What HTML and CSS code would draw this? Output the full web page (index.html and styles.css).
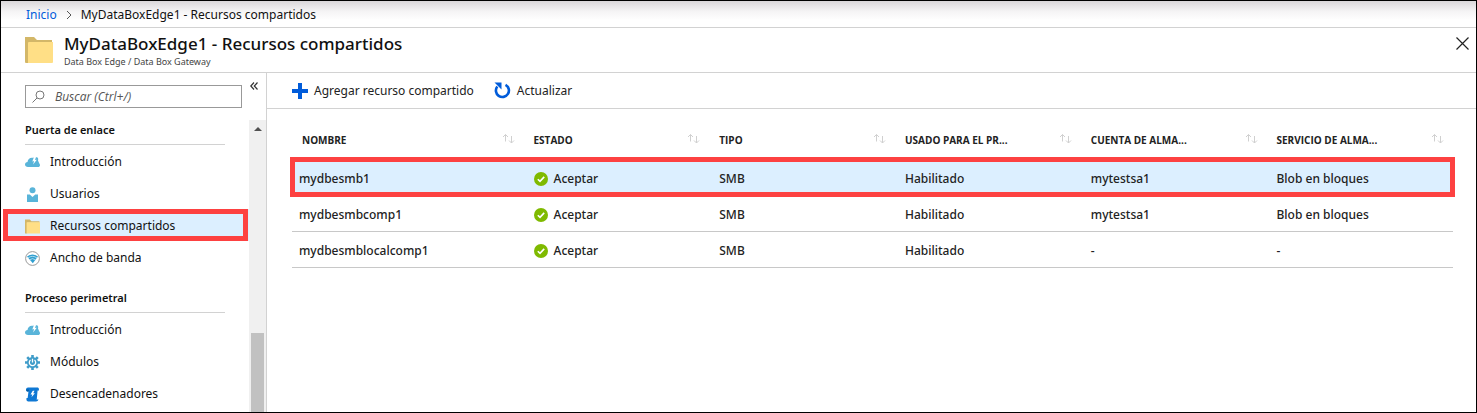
FILE: index.html
```html
<!DOCTYPE html>
<html lang="es">
<head>
<meta charset="utf-8">
<title>MyDataBoxEdge1 - Recursos compartidos</title>
<link rel="stylesheet" href="styles.css">
</head>
<body>
<svg class="defs" aria-hidden="true">
  <symbol id="cloud" viewBox="0 0 15 15"><path fill="#59b4d9" d="M3 12C1.200 12 0 11 0 9.600 0 8.300 1.100 7.300 2.500 7.100 2.800 4.700 4.500 2.800 6.900 2.800 9 2.800 10.500 1.800 12 2.300 13.200 2.700 13.500 4 13 5.500L14.200 8.200C14.800 8.800 15 9.500 15 10.200 15 11.300 14.200 12 13 12Z"/><path fill="#fff" d="M9 2 7.300 6.400 9.100 6.100 8.100 9.600 11.800 4.800 10 5.100 11 2Z"/></symbol>
  <symbol id="folder" viewBox="0 0 28 26"><path fill="#d3b768" d="M0 0h9l3 3h15v3H4v20H1q-1 0-1-1z"/><path fill="#ffdf86" d="M4 5h24v20q0 1-1 1H3V6q0-1 1-1z"/></symbol>
  <symbol id="sort" viewBox="0 0 12 10"><path fill="none" stroke="#d0d0d0" d="M2.500 7.500V.5M0 3 2.500.5 5 3M8.500 2v7M6 6.500 8.500 9 11 6.500"/></symbol>
  <symbol id="ok" viewBox="0 0 14 14"><circle cx="7" cy="7" r="7" fill="#7fba00"/><path fill="none" stroke="#fff" stroke-width="1.600" d="M3.800 7.200 6 9.400 10.200 4.900"/></symbol>
</svg>
<div class="blade">
  <nav class="crumbs" aria-label="Ruta">
    <a href="#">Inicio</a>
    <svg width="6" height="10" viewBox="0 0 6 10"><path fill="none" stroke="#555" d="M1 1l4 4-4 4"/></svg>
    <span>MyDataBoxEdge1 - Recursos compartidos</span>
  </nav>
  <header class="title-bar">
    <svg class="title-icon"><use href="#folder"/></svg>
    <div class="titles">
      <h1>MyDataBoxEdge1 - Recursos compartidos</h1>
      <p>Data Box Edge / Data Box Gateway</p>
    </div>
    <button class="close" aria-label="Cerrar"><svg width="13" height="13" viewBox="0 0 13 13"><path stroke="#222" stroke-width="1.200" d="M.5.500l12 12M12.500.500l-12 12"/></svg></button>
  </header>
  <div class="content">
    <aside class="sidebar">
      <div class="search-row">
        <label class="search">
          <svg width="13" height="13" viewBox="0 0 13 13"><g fill="none" stroke="#777"><circle cx="8" cy="5" r="4"/><path d="M5 8 .5 12.500"/></g></svg>
          <input type="search" placeholder="Buscar (Ctrl+/)" aria-label="Buscar">
        </label>
        <button class="collapse" aria-label="Contraer menú"><svg width="8" height="8" viewBox="0 0 8 8"><path fill="none" stroke="#333" stroke-width="1.200" d="M4 .5.800 4 4 7.500M7.500.500 4.300 4l3.200 3.500"/></svg></button>
      </div>
      <div class="menu-area">
        <nav class="menu" aria-label="Menú">
          <h2>Puerta de enlace</h2>
          <a href="#"><svg><use href="#cloud"/></svg>Introducción</a>
          <a href="#"><svg viewBox="0 0 15 15"><g fill="#59b4d9"><circle cx="7.500" cy="3.200" r="3"/><path d="M2 7.500h2.800L7.500 10l2.700-2.500H13V15H2z"/></g></svg>Usuarios</a>
          <a href="#" class="selected" aria-current="page"><svg><use href="#folder"/></svg>Recursos compartidos</a>
          <a href="#"><svg viewBox="0 0 15 15"><circle cx="7.500" cy="7.500" r="6.900" fill="#fff" stroke="#999"/><path fill="#2f9fd0" d="M2 5.500Q7.500 1.500 13 5.500L7.800 12.300Z"/><path fill="none" stroke="#fff" stroke-width=".6" d="M3 7Q7.500 3.700 12 7M4.500 8.800Q7.500 6.500 10.500 8.800"/></svg>Ancho de banda</a>
          <h2>Proceso perimetral</h2>
          <a href="#"><svg><use href="#cloud"/></svg>Introducción</a>
          <a href="#"><svg viewBox="0 0 15 15"><g fill="#3f9cc9"><circle cx="7.500" cy="7.500" r="5.500"/><path d="M6.200 0h2.600v15H6.200zM0 6.200h15v2.600H0z"/><path d="M6.200 0h2.600v15H6.200zM0 6.200h15v2.600H0z" transform="rotate(45 7.500 7.500)"/></g><path fill="none" stroke="#fff" stroke-width="1.300" d="M5.500 5A3.200 3.200 0 1 0 9.500 5M7.500 3.800V7.500"/></svg>Módulos</a>
          <a href="#"><svg viewBox="0 0 15 15"><path fill="#0f78d4" d="M3 .5H13Q14.200 1 14 3.500H12.600L11.800 12H2.500L3.500 4.500H2Q1 4 1 2.300 1.200.500 3 .5Z"/><path fill="#005ba1" d="M1.200 2.500H4L3.500 4.500H2Q1.200 4 1.200 2.500Z"/><path fill="#0f78d4" d="M1.500 11H11Q11 13 13.500 12.500 13 14.500 11 14.500H3Q1 14 1.500 11Z"/><path fill="#fff" d="M7.800 3.800 5.500 7.500H7.300L6.500 10.300 9.900 6.300H8.200L9.500 3.800Z"/></svg>Desencadenadores</a>
        </nav>
        <div class="scrollbar" aria-hidden="true">
          <svg width="8" height="4" viewBox="0 0 8 4"><path fill="#505050" d="M0 4 4 0l4 4z"/></svg>
          <div class="thumb"></div>
        </div>
      </div>
    </aside>
    <main>
      <div class="toolbar">
        <button><svg width="16" height="16" viewBox="0 0 16 16"><path fill="#015cda" d="M6 0h4v6h6v4h-6v6H6v-6H0V6h6z"/></svg>Agregar recurso compartido</button>
        <button><svg width="17" height="17" viewBox="0 0 17 17"><path fill="none" stroke="#015cda" stroke-width="2.600" d="M11.500 2.800A6.500 6.500 0 1 1 3.300 4.500"/><path fill="#015cda" d="M.500.500H7.500V7.500L5.500 5.500 3.500 3.500Z"/></svg>Actualizar</button>
      </div>
      <table>
        <thead><tr>
          <th><div><span>NOMBRE</span><svg><use href="#sort"/></svg></div></th>
          <th><div><span>ESTADO</span><svg><use href="#sort"/></svg></div></th>
          <th><div><span>TIPO</span><svg><use href="#sort"/></svg></div></th>
          <th><div><span>USADO PARA EL PR...</span><svg><use href="#sort"/></svg></div></th>
          <th><div><span>CUENTA DE ALMA...</span><svg><use href="#sort"/></svg></div></th>
          <th><div><span>SERVICIO DE ALMA...</span><svg><use href="#sort"/></svg></div></th>
        </tr></thead>
        <tbody>
          <tr class="selected"><td>mydbesmb1</td><td><div class="status"><svg><use href="#ok"/></svg>Aceptar</div></td><td>SMB</td><td>Habilitado</td><td>mytestsa1</td><td>Blob en bloques</td></tr>
          <tr><td>mydbesmbcomp1</td><td><div class="status"><svg><use href="#ok"/></svg>Aceptar</div></td><td>SMB</td><td>Habilitado</td><td>mytestsa1</td><td>Blob en bloques</td></tr>
          <tr><td>mydbesmblocalcomp1</td><td><div class="status"><svg><use href="#ok"/></svg>Aceptar</div></td><td>SMB</td><td>Habilitado</td><td>-</td><td>-</td></tr>
        </tbody>
      </table>
    </main>
  </div>
</div>
</body>
</html>
```
FILE: styles.css
```css
* { box-sizing: border-box; }
body {
  margin: 0;
  font: 12px/20px "Noto Sans", "Open Sans", sans-serif;
  color: #111;
  background: #fff;
}
svg { display: block; flex: none; }
.defs { position: absolute; width: 0; height: 0; }
button { border: 0; padding: 0; background: none; font: inherit; color: inherit; cursor: pointer; }
a { color: inherit; text-decoration: none; }
h1, h2, p { margin: 0; }

.blade {
  display: flex;
  flex-direction: column;
  min-height: 100vh;
  border: 1px solid #000;
}
.crumbs {
  display: flex;
  align-items: center;
  gap: 9px;
  height: 27px;
  padding: 2px 25px 0;
  border-bottom: 1px solid #d2d2d2;
  background: linear-gradient(#dad7da, #f5f4f5 40%, #fff 75%);
}
.crumbs a { color: #015cda; }

.title-bar {
  display: flex;
  align-items: center;
  gap: 11px;
  height: 45px;
  padding: 0 7px 0 24px;
  border-bottom: 1px solid #d2d2d2;
}
.title-icon { width: 28px; height: 26px; }
.titles { flex: 1; padding-top: 2px; }
h1 { font-size: 17px; line-height: 22px; font-weight: 500; }
.titles p { font-size: 9px; line-height: 14px; color: #444; }
.close { align-self: flex-start; padding-top: 9px; }

.content { display: flex; flex: 1; }
.sidebar {
  display: flex;
  flex-direction: column;
  flex: 0 0 266px;
  border-right: 1px solid #d2d2d2;
}
.search-row { display: flex; align-items: flex-start; gap: 8px; padding: 9px 8px 12px 24px; }
.search {
  display: flex;
  align-items: center;
  gap: 10px;
  flex: 1;
  height: 23px;
  margin-top: 3px;
  padding: 0 6px;
  border: 1px solid #999;
}
.search input {
  flex: 1;
  min-width: 0;
  border: 0;
  padding: 0;
  outline: 0;
  background: none;
  font: italic 12px/20px "Open Sans", "Noto Sans", sans-serif;
}
.search input::placeholder { color: #555; }
.menu-area { display: flex; flex: 1; }
.menu { flex: 1; }
.menu h2 {
  margin: 15px 24px 0;
  padding-bottom: 4px;
  border-bottom: 1px solid #d2d2d2;
  font-size: 11px;
  line-height: 20px;
  font-weight: 600;
}
.menu h2:first-child { margin-top: 0; }
.menu a {
  position: relative;
  display: flex;
  align-items: center;
  gap: 10px;
  height: 32px;
  padding: 2px 0 0 24px;
}
.menu svg { width: 15px; height: 15px; }
.menu .selected { background: linear-gradient(#dcefff, #dcefff) 2px 0 no-repeat; }
.menu .selected::after {
  content: "";
  position: absolute;
  inset: 0 1px 0 2px;
  border: 5px solid #fd4141;
}
.scrollbar {
  display: grid;
  grid-template-rows: 1fr 79px;
  justify-items: center;
  width: 17px;
  padding-top: 7px;
  background: #f0f0f0;
}
.thumb { width: 13px; background: #c1c1c1; }

main { flex: 1; min-width: 0; }
.toolbar {
  display: flex;
  align-items: center;
  gap: 20px;
  height: 36px;
  padding: 0 25px;
  border-bottom: 1px solid #d2d2d2;
  color: #222;
}
.toolbar button { display: flex; align-items: center; gap: 6px; }

table {
  width: calc(100% - 48px);
  margin: 11px 23px 0 25px;
  border-collapse: separate;
  border-spacing: 0;
  table-layout: fixed;
  color: #222;
}
th, td { padding: 0 12px 0 7px; text-align: left; width: 16%; }
th:first-child { width: 20.2%; padding-left: 10px; }
th:last-child { width: 15.8%; padding-right: 9px; }
th { height: 40px; font: 700 10px/20px "Open Sans", "Noto Sans", sans-serif; }
th div { display: flex; align-items: center; justify-content: space-between; }
th svg { width: 12px; height: 10px; margin-bottom: 3px; }
tbody tr { position: relative; }
td { height: 36px; padding-top: 2px; border-bottom: 1px solid #c8c8c8; font-weight: 500; }
tbody .selected { background: #dcefff; }
tbody .selected::after {
  content: "";
  position: absolute;
  inset: -3px -2px -1px;
  border: 5px solid #fd4141;
}
.status { display: flex; align-items: center; gap: 6px; }
.status svg { width: 14px; height: 14px; }
```
